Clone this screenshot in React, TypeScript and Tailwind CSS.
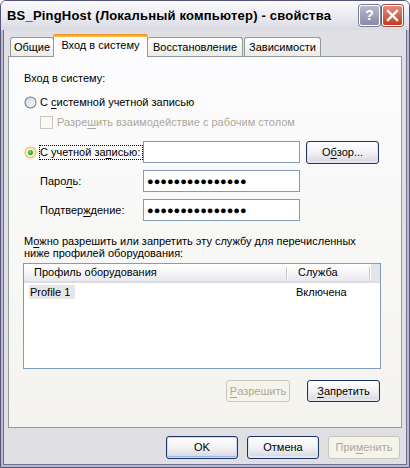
import React from "react";

const F = "font-['Liberation_Sans',Arial,sans-serif]";

function U({ children }: { children: React.ReactNode }) {
  return <span className="underline underline-offset-[2px]">{children}</span>;
}

function Radio({ checked }: { checked?: boolean }) {
  return (
    <svg width="13" height="13" viewBox="0 0 13 13" className="shrink-0">
      <defs>
        <linearGradient id="rg1" x1="0" y1="0" x2="1" y2="1">
          <stop offset="0" stopColor="#d0d0dc" />
          <stop offset="1" stopColor="#ffffff" />
        </linearGradient>
      </defs>
      <circle cx="6.5" cy="6.5" r="6" fill={checked ? "#f6c25c" : "#5f7a9e"} />
      <circle cx="6.5" cy="6.5" r="5" fill={checked ? "#fbd98c" : `url(#rg1)`} />
      {checked && <circle cx="6.5" cy="6.5" r="4" fill="#f2f2f6" />}
      {checked && <circle cx="6.5" cy="6.5" r="2.6" fill="#3fae3f" />}
      {checked && <circle cx="6" cy="6" r="1" fill="#8fe08f" />}
    </svg>
  );
}

function Btn({
  children,
  w = "w-[72px]",
  h = "h-[23px]",
  disabled,
  def,
}: {
  children: React.ReactNode;
  w?: string;
  h?: string;
  disabled?: boolean;
  def?: boolean;
}) {
  if (disabled)
    return (
      <div
        className={`${w} ${h} shrink-0 rounded-[3px] border border-[#c9c7ba] bg-[#f5f4ea] flex items-center justify-center text-[11px] text-[#aca899]`}
      >
        {children}
      </div>
    );
  return (
    <div
      className={`${w} ${h} shrink-0 rounded-[3px] border border-[#1c3466] bg-gradient-to-b from-[#ffffff] via-[#f2f2f6] to-[#d4d4de] flex items-center justify-center text-[11px] text-black ${
        def ? "shadow-[inset_0_0_0_1px_#c8daf8,inset_0_-1px_0_1px_#9db7e8]" : "shadow-[inset_0_-1px_0_1px_#e4e4ec]"
      }`}
    >
      {children}
    </div>
  );
}

function TextBox({ value }: { value?: string }) {
  return (
    <div className="w-[157px] h-[22px] shrink-0 border border-[#7f9db9] bg-white flex items-center pl-[3px] text-[11px] tracking-[0px] text-black leading-none">
      {value}
    </div>
  );
}

export default function App() {
  const dots = "\u25CF".repeat(15);
  return (
    <div className={`${F} w-[410px] h-[468px] flex flex-col bg-[#b9b9cb] border border-[#55557a] rounded-t-[6px] overflow-hidden text-[11px] text-black`}>
      {/* Title bar */}
      <div className="h-[29px] shrink-0 flex items-center bg-gradient-to-b from-[#fbfbfd] via-[#ececf1] to-[#d9d9e3] px-[6px]">
        <div className="font-bold text-[13px] tracking-[0.2px] text-black flex-1 pt-[1px]">
          BS_PingHost (Локальный компьютер) - свойства
        </div>
        <div className="flex gap-[2px] mr-[0px]">
          <div className="w-[21px] h-[21px] rounded-[3px] border border-white bg-gradient-to-b from-[#b8b8cc] to-[#8a8aa6] flex items-center justify-center text-white font-bold text-[14px] shadow-[0_0_0_1px_#7c7c98]">
            ?
          </div>
          <div className="w-[21px] h-[21px] rounded-[3px] border border-white bg-gradient-to-b from-[#e88a78] to-[#c23a24] flex items-center justify-center shadow-[0_0_0_1px_#9c4a40]">
            <svg width="13" height="13" viewBox="0 0 13 13">
              <path d="M2 2 L11 11 M11 2 L2 11" stroke="white" strokeWidth="2.4" strokeLinecap="square" />
            </svg>
          </div>
        </div>
      </div>

      {/* Body */}
      <div className="flex-1 flex flex-col mx-[2px] mb-[2px] bg-[#e0dfe3] border-l border-r border-b border-[#6e6e8e] px-[4px]">
        {/* Tabs */}
        <div className="mt-[4px] h-[22px] flex items-end pl-[2px] relative z-10">
          <div className="w-[44px] h-[19px] border border-b-0 border-[#919b9c] rounded-t-[3px] bg-gradient-to-b from-white to-[#ecebe6] flex items-center justify-center pt-[1px]">
            Общие
          </div>
          <div className="w-[95px] h-[23px] -ml-[1px] -mb-[1px] border-x border-[#919b9c] rounded-t-[3px] bg-[#fcfcfe] flex flex-col">
            <div className="h-[3px] -mx-[1px] rounded-t-[3px] bg-gradient-to-b from-[#e68b2c] to-[#ffc73c]" />
            <div className="flex-1 flex items-center justify-center pb-[3px]">Вход в систему</div>
          </div>
          <div className="w-[95px] h-[19px] border border-b-0 border-l-0 border-[#919b9c] rounded-t-[3px] bg-gradient-to-b from-white to-[#ecebe6] flex items-center justify-center pt-[1px]">
            Восстановление
          </div>
          <div className="w-[77px] h-[19px] ml-[1px] border border-b-0 border-[#919b9c] rounded-t-[3px] bg-gradient-to-b from-white to-[#ecebe6] flex items-center justify-center pt-[1px]">
            Зависимости
          </div>
        </div>

        {/* Panel */}
        <div className="h-[372px] border border-[#919b9c] bg-gradient-to-b from-[#fcfcfe] to-[#f4f3ee] flex flex-col pl-[15px] pt-[14px]">
          <div className="h-[14px] flex items-center">Вход в систему:</div>

          <div className="mt-[10px] h-[14px] flex items-center gap-[3px]">
            <Radio />
            <span>
              С <U>с</U>истемной учетной записью
            </span>
          </div>

          <div className="mt-[6px] h-[14px] flex items-center gap-[4px] pl-[16px] text-[#aca899]">
            <div className="w-[13px] h-[13px] border border-[#cac8bb] bg-[#faf9f4]" />
            <span>
              Разре<U>ш</U>ить взаимодействие с рабочим столом
            </span>
          </div>

          <div className="mt-[12px] h-[22px] flex items-center">
            <Radio checked />
            <span className="ml-[2px] w-[104px] h-[15px] flex items-center outline-1 outline-dotted outline-black -outline-offset-1 px-[1px]">
              С учетной за<U>п</U>исью:
            </span>
            <TextBox />
            <div className="ml-[6px]">
              <Btn w="w-[73px]">
                О<U>б</U>зор...
              </Btn>
            </div>
          </div>

          <div className="mt-[7px] h-[22px] flex items-center">
            <span className="w-[119px] pl-[16px]">
              Паро<U>л</U>ь:
            </span>
            <TextBox value={dots} />
          </div>

          <div className="mt-[7px] h-[22px] flex items-center">
            <span className="w-[119px] pl-[16px]">
              Подтвер<U>ж</U>дение:
            </span>
            <TextBox value={dots} />
          </div>

          <div className="mt-[14px] leading-[12px]">
            М<U>о</U>жно разрешить или запретить эту службу для перечисленных
            <br />
            ниже профилей оборудования:
          </div>

          {/* List view */}
          <div className="mt-[4px] -ml-[1px] w-[358px] h-[106px] border border-[#7f9db9] bg-white flex flex-col">
            <div className="h-[19px] flex items-stretch bg-gradient-to-b from-[#ffffff] via-[#f6f6f8] to-[#e8e8ee] border-b-[2px] border-[#dcdce4]">
              <div className="w-[264px] flex items-center pl-[10px] relative">
                Профиль оборудования
                <div className="absolute right-0 top-[3px] bottom-[2px] w-[2px] border-l border-[#c7c7d0] border-r border-r-white" />
              </div>
              <div className="w-[83px] flex items-center pl-[10px] relative">
                Служба
                <div className="absolute right-0 top-[3px] bottom-[2px] w-[2px] border-l border-[#c7c7d0] border-r border-r-white" />
              </div>
              <div className="flex-1 bg-[#e4e4ea]" />
            </div>
            <div className="h-[14px] mt-[2px] flex items-center">
              <div className="w-[264px] pl-[5px]">
                <span className="bg-[#e6e6e6] pl-[1px] pr-[5px] inline-block leading-[14px]">Profile 1</span>
              </div>
              <div className="pl-[8px]">Включена</div>
            </div>
          </div>

          <div className="mt-[11px] h-[22px] flex items-center justify-end pr-[21px] gap-[17px]">
            <Btn w="w-[64px]" h="h-[22px]" disabled>
              <U>Р</U>азрешить
            </Btn>
            <Btn w="w-[73px]" h="h-[22px]">
              <U>З</U>апретить
            </Btn>
          </div>
        </div>

        {/* Bottom buttons */}
        <div className="mt-[8px] flex justify-end gap-[9px] pr-[2px]">
          <Btn def>OK</Btn>
          <Btn>Отмена</Btn>
          <Btn disabled>
            При<U>м</U>енить
          </Btn>
        </div>
      </div>
    </div>
  );
}
